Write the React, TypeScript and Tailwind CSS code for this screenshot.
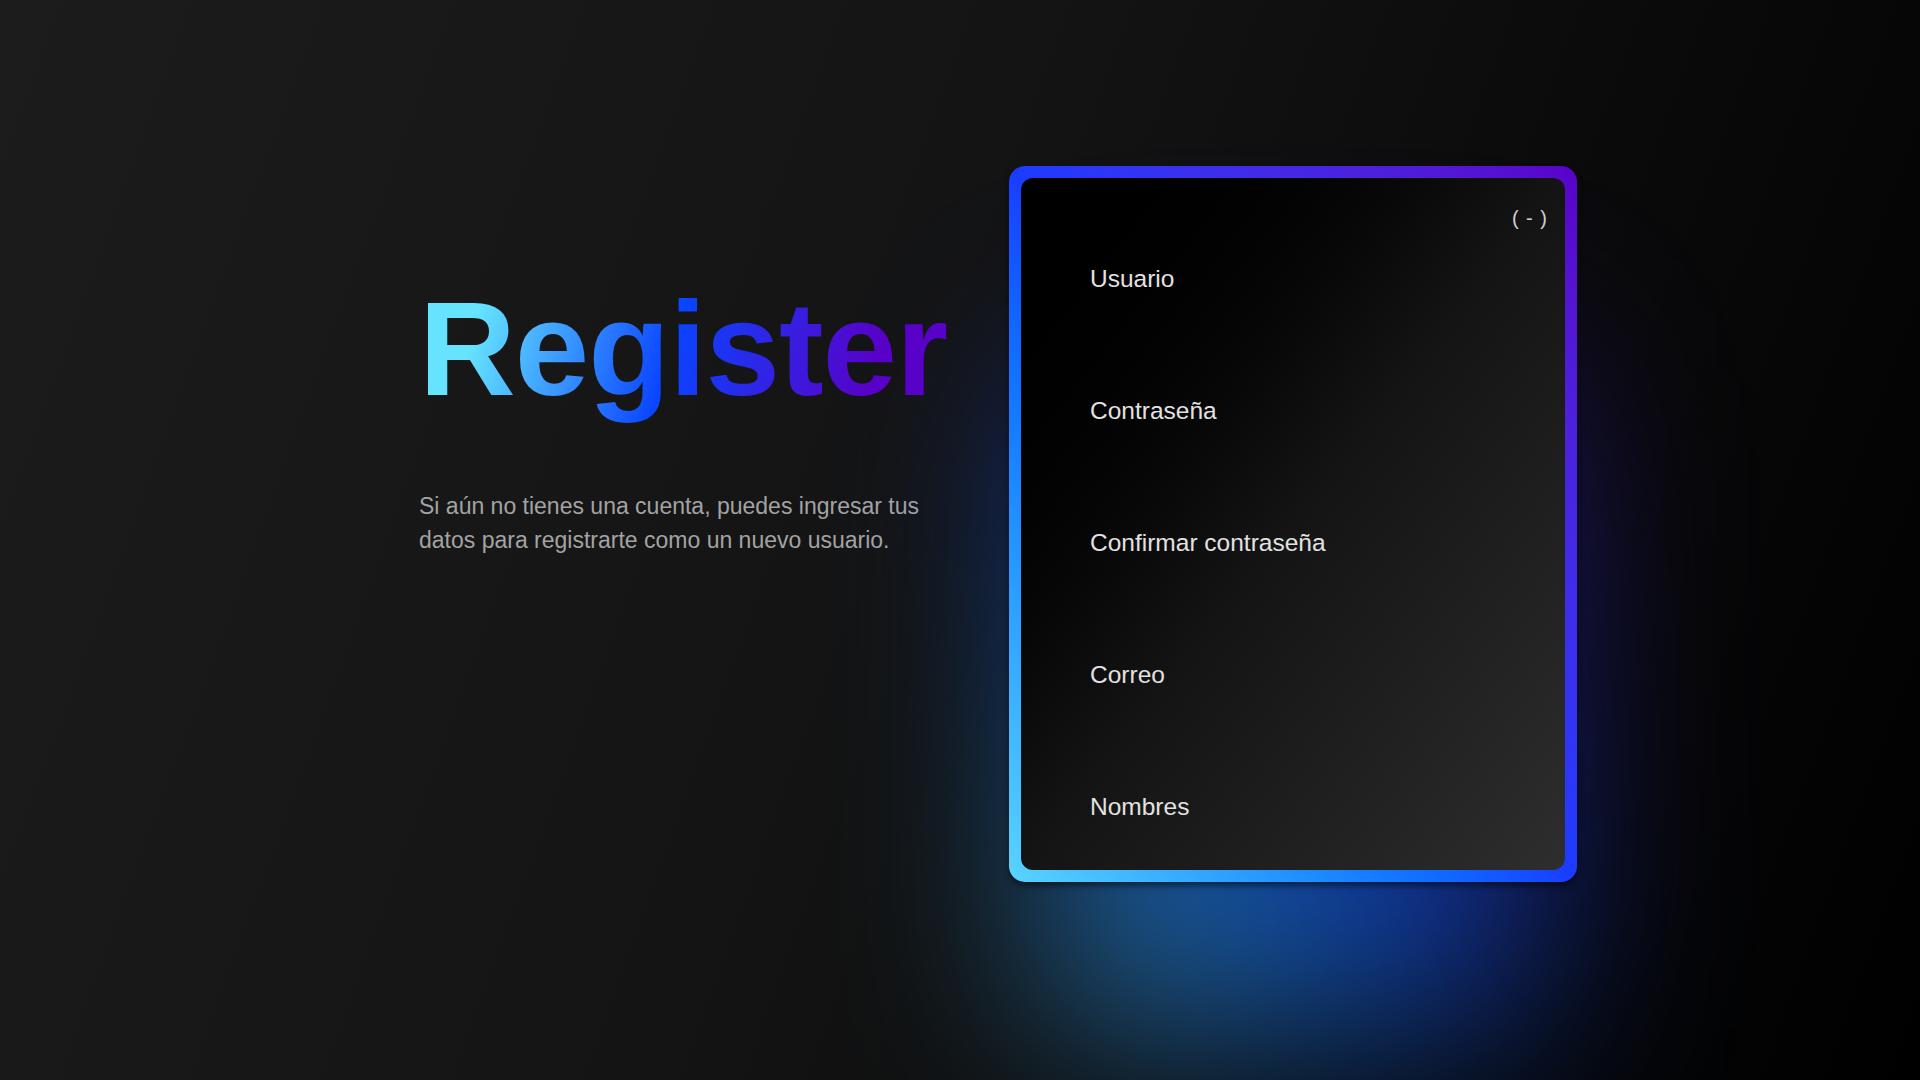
const fields = ['Usuario', 'Contraseña', 'Confirmar contraseña', 'Correo', 'Nombres']

export default function App() {
  return (
    <div className="relative w-full h-[1080px] overflow-hidden bg-[linear-gradient(110deg,#1c1c1c_0%,#141414_45%,#000_100%)] font-['Liberation_Sans',Arial,sans-serif]">
      <div className="flex items-start pl-[419px] pt-[166px] gap-[56px]">
        {/* Left copy */}
        <div className="w-[534px] pt-[108px]">
          <h1 className="text-[134px] font-bold leading-[150px] tracking-[-1px] bg-[linear-gradient(105deg,#66e4ff_12%,#0a44ff_48%,#5a00c8_85%)] bg-clip-text text-transparent w-fit">
            Register
          </h1>
          <p className="mt-[65px] w-[525px] text-[23px] leading-[34px] text-[#a3a3a3]">
            Si aún no tienes una cuenta, puedes ingresar tus datos para registrarte como un nuevo usuario.
          </p>
        </div>

        {/* Card */}
        <div className="relative w-[568px] h-[716px]">
          <div className="absolute inset-x-[40px] top-[200px] bottom-[-150px] rounded-[40px] bg-linear-to-tr from-[#4fc8ff] via-[#1448ff] to-[#3a10c8] blur-[100px] opacity-60" />
          <div className="relative h-full rounded-[16px] p-[12px] shadow-[0_4px_6px_rgba(0,0,0,0.5)] bg-linear-to-tr from-[#5ad4ff] via-[#1a3cff] to-[#5a00c8]">
            <div className="h-full rounded-[12px] bg-linear-to-br from-black via-[#141414] to-[#2e2e2e] flex flex-col">
              <div className="flex justify-end pr-[17px] pt-[28px] text-[20px] leading-[24px] tracking-[1px] text-[#d0d0d0] whitespace-pre">( - )</div>
              <div className="flex flex-col pl-[69px] pt-[35px]">
                {fields.map((f) => (
                  <label key={f} className="h-[132px] text-[24.5px] leading-[28px] text-[#e2e2e2]">
                    {f}
                  </label>
                ))}
              </div>
            </div>
          </div>
        </div>
      </div>
    </div>
  )
}
